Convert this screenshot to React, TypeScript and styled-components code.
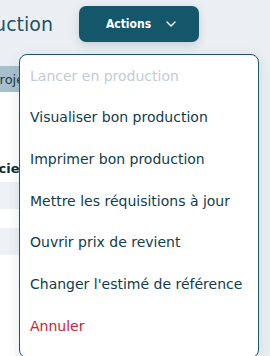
import styled, { createGlobalStyle } from "styled-components"

const Global = createGlobalStyle`
  html, body {
    margin: 0;
    padding: 0;
    background: #ebeff3;
    font-family: "DejaVu Sans", Verdana, sans-serif;
    overflow: hidden;
  }
`

const Page = styled.div`
  position: relative;
  width: 270px;
  height: 356px;
  overflow: hidden;
`

const Header = styled.div`
  display: flex;
  align-items: center;
  height: 48px;
  margin-left: -150px;
  gap: 26px;
`

const Title = styled.h1`
  margin: 0;
  width: 203px;
  text-align: right;
  font-size: 19px;
  font-weight: normal;
  color: #1a5468;
  white-space: nowrap;
`

const ActionsButton = styled.button`
  display: flex;
  align-items: center;
  justify-content: center;
  gap: 15px;
  width: 120px;
  height: 36px;
  padding: 0 0 0 4px;
  border: 0;
  border-radius: 7px;
  background: #14566a;
  color: #fff;
  font-family: "DejaVu Sans Condensed", "DejaVu Sans", sans-serif;
  font-size: 12px;
  font-weight: bold;
  box-shadow: 0 3px 10px rgba(20, 60, 90, 0.18);
`

const Panel = styled.div`
  margin-top: 18px;
  margin-left: -60px;
  width: 258px;
  height: 300px;
  background: #fff;
`

const HeadRow = styled.div`
  height: 26px;
  display: flex;
  align-items: center;
  padding-left: 52px;
  background: #a7c0cd;
  color: #1d3a46;
  font-size: 13px;
`

const Section = styled.div`
  height: 84px;
  display: flex;
  align-items: flex-end;
  padding: 0 0 6px 20px;
  font-size: 13px;
  font-weight: bold;
  color: #0d2b36;
`

const Row = styled.div<{ $shade?: boolean }>`
  height: ${(p) => (p.$shade ? "27px" : "19px")};
  background: ${(p) => (p.$shade ? "#eef2f6" : "#fff")};
`

const Menu = styled.ul`
  position: absolute;
  left: 19px;
  top: 54px;
  width: 238px;
  height: 297px;
  margin: 0;
  padding: 0 0 5px;
  list-style: none;
  background: #fff;
  border: 1px solid #1b5669;
  border-radius: 8px;
  box-shadow: 0 4px 14px rgba(20, 60, 90, 0.12);
`

const Item = styled.li<{ $tone?: "disabled" | "danger" }>`
  height: 41.67px;
  display: flex;
  align-items: center;
  padding-left: 10px;
  font-size: 14px;
  white-space: nowrap;
  color: ${(p) =>
    p.$tone === "disabled" ? "#c5cad3" : p.$tone === "danger" ? "#cc2236" : "#113c4a"};
`

const items: { label: string; tone?: "disabled" | "danger" }[] = [
  { label: "Lancer en production", tone: "disabled" },
  { label: "Visualiser bon production" },
  { label: "Imprimer bon production" },
  { label: "Mettre les réquisitions à jour" },
  { label: "Ouvrir prix de revient" },
  { label: "Changer l'estimé de référence" },
  { label: "Annuler", tone: "danger" },
]

export default function App() {
  return (
    <Page>
      <Global />
      <Header>
        <Title>Bon de production</Title>
        <ActionsButton>
          Actions
          <svg width="10" height="6" viewBox="0 0 10 6" fill="none">
            <path d="M1 1l4 4 4-4" stroke="#fff" strokeWidth="1.4" strokeLinecap="round" strokeLinejoin="round" />
          </svg>
        </ActionsButton>
      </Header>
      <Panel>
        <HeadRow>Projet</HeadRow>
        <Section>Licencie</Section>
        <Row $shade />
        <Row />
        <Row $shade />
      </Panel>
      <Menu>
        {items.map((it) => (
          <Item key={it.label} $tone={it.tone}>
            {it.label}
          </Item>
        ))}
      </Menu>
    </Page>
  )
}
